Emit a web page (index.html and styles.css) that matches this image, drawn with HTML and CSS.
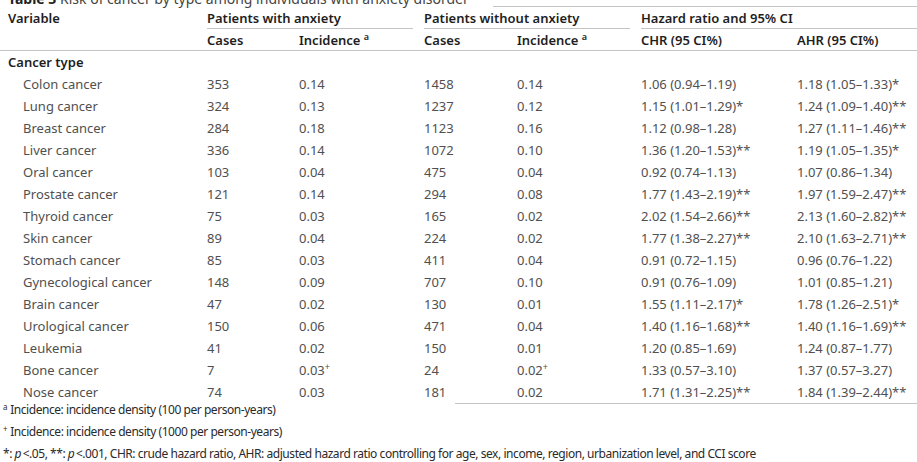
FILE: index.html
```html
<!DOCTYPE html>
<html lang="en">
<head>
<meta charset="utf-8">
<title>Table 3 Risk of cancer by type among individuals with anxiety disorder</title>
<link rel="stylesheet" href="styles.css">
</head>
<body>
<div class="caption">
  <span class="cap-text"><b>Table 3</b> Risk of cancer by type among individuals with anxiety disorder</span>
  <span class="cap-rule"></span>
</div>
<div class="table">
  <div class="row head1">
    <div class="cell first">Variable</div>
    <div class="grp"><div class="grp-label">Patients with anxiety</div></div>
    <div class="grp"><div class="grp-label">Patients without anxiety</div></div>
    <div class="grp last"><div class="grp-label">Hazard ratio and 95% CI</div></div>
  </div>
  <div class="row head2">
    <div class="cell first"></div>
    <div class="cell">Cases</div>
    <div class="cell">Incidence <sup>a</sup></div>
    <div class="cell">Cases</div>
    <div class="cell">Incidence <sup>a</sup></div>
    <div class="cell">CHR (95 CI%)</div>
    <div class="cell">AHR (95 CI%)</div>
  </div>
  <div class="row section"><div class="cell first">Cancer type</div></div>
  <div class="row"><div class="cell label">Colon cancer</div><div class="cell">353</div><div class="cell">0.14</div><div class="cell">1458</div><div class="cell">0.14</div><div class="cell">1.06 (0.94–1.19)</div><div class="cell">1.18 (1.05–1.33)*</div></div>
  <div class="row"><div class="cell label">Lung cancer</div><div class="cell">324</div><div class="cell">0.13</div><div class="cell">1237</div><div class="cell">0.12</div><div class="cell">1.15 (1.01–1.29)*</div><div class="cell">1.24 (1.09–1.40)**</div></div>
  <div class="row"><div class="cell label">Breast cancer</div><div class="cell">284</div><div class="cell">0.18</div><div class="cell">1123</div><div class="cell">0.16</div><div class="cell">1.12 (0.98–1.28)</div><div class="cell">1.27 (1.11–1.46)**</div></div>
  <div class="row"><div class="cell label">Liver cancer</div><div class="cell">336</div><div class="cell">0.14</div><div class="cell">1072</div><div class="cell">0.10</div><div class="cell">1.36 (1.20–1.53)**</div><div class="cell">1.19 (1.05–1.35)*</div></div>
  <div class="row"><div class="cell label">Oral cancer</div><div class="cell">103</div><div class="cell">0.04</div><div class="cell">475</div><div class="cell">0.04</div><div class="cell">0.92 (0.74–1.13)</div><div class="cell">1.07 (0.86–1.34)</div></div>
  <div class="row"><div class="cell label">Prostate cancer</div><div class="cell">121</div><div class="cell">0.14</div><div class="cell">294</div><div class="cell">0.08</div><div class="cell">1.77 (1.43–2.19)**</div><div class="cell">1.97 (1.59–2.47)**</div></div>
  <div class="row"><div class="cell label">Thyroid cancer</div><div class="cell">75</div><div class="cell">0.03</div><div class="cell">165</div><div class="cell">0.02</div><div class="cell">2.02 (1.54–2.66)**</div><div class="cell">2.13 (1.60–2.82)**</div></div>
  <div class="row"><div class="cell label">Skin cancer</div><div class="cell">89</div><div class="cell">0.04</div><div class="cell">224</div><div class="cell">0.02</div><div class="cell">1.77 (1.38–2.27)**</div><div class="cell">2.10 (1.63–2.71)**</div></div>
  <div class="row"><div class="cell label">Stomach cancer</div><div class="cell">85</div><div class="cell">0.03</div><div class="cell">411</div><div class="cell">0.04</div><div class="cell">0.91 (0.72–1.15)</div><div class="cell">0.96 (0.76–1.22)</div></div>
  <div class="row"><div class="cell label">Gynecological cancer</div><div class="cell">148</div><div class="cell">0.09</div><div class="cell">707</div><div class="cell">0.10</div><div class="cell">0.91 (0.76–1.09)</div><div class="cell">1.01 (0.85–1.21)</div></div>
  <div class="row"><div class="cell label">Brain cancer</div><div class="cell">47</div><div class="cell">0.02</div><div class="cell">130</div><div class="cell">0.01</div><div class="cell">1.55 (1.11–2.17)*</div><div class="cell">1.78 (1.26–2.51)*</div></div>
  <div class="row"><div class="cell label">Urological cancer</div><div class="cell">150</div><div class="cell">0.06</div><div class="cell">471</div><div class="cell">0.04</div><div class="cell">1.40 (1.16–1.68)**</div><div class="cell">1.40 (1.16–1.69)**</div></div>
  <div class="row"><div class="cell label">Leukemia</div><div class="cell">41</div><div class="cell">0.02</div><div class="cell">150</div><div class="cell">0.01</div><div class="cell">1.20 (0.85–1.69)</div><div class="cell">1.24 (0.87–1.77)</div></div>
  <div class="row"><div class="cell label">Bone cancer</div><div class="cell">7</div><div class="cell">0.03<sup>+</sup></div><div class="cell">24</div><div class="cell">0.02<sup>+</sup></div><div class="cell">1.33 (0.57–3.10)</div><div class="cell">1.37 (0.57–3.27)</div></div>
  <div class="row"><div class="cell label">Nose cancer</div><div class="cell">74</div><div class="cell">0.03</div><div class="cell">181</div><div class="cell">0.02</div><div class="cell">1.71 (1.31–2.25)**</div><div class="cell">1.84 (1.39–2.44)**</div></div>
</div>
<div class="table-end"></div>
<div class="notes">
  <p class="note"><sup>a</sup> Incidence: incidence density (100 per person-years)</p>
  <p class="note"><sup>+</sup> Incidence: incidence density (1000 per person-years)</p>
  <p class="note">*: <i>p</i>&thinsp;&lt;.05, **: <i>p</i>&thinsp;&lt;.001, CHR: crude hazard ratio, AHR: adjusted hazard ratio controlling for age, sex, income, region, urbanization level, and CCI score</p>
</div>
</body>
</html>
```
FILE: styles.css
```css
html, body {
  margin: 0;
  padding: 0;
  background: #ffffff;
}
body {
  font-family: "Noto Sans", "Open Sans", "Liberation Sans", sans-serif;
  font-size: 13px;
  color: #333333;
  overflow: hidden;
  width: 917px;
  height: 462px;
}

.caption {
  display: flex;
  align-items: flex-end;
  height: 17px;
  margin-top: -10px;
}
.cap-text {
  font-size: 14px;
  line-height: 16px;
  padding-left: 8px;
  color: #444;
  white-space: nowrap;
}
.cap-text b {
  font-weight: 700;
  color: #222;
}
.cap-rule {
  flex: 1;
  margin-left: 24px;
  border-bottom: 1px solid #c4c4c4;
}

.row {
  display: grid;
  grid-template-columns: 207px 92px 125px 93px 124px 156px 120px;
  box-sizing: border-box;
  height: 22px;
  line-height: 22px;
  color: #505050;
}
.cell {
  white-space: nowrap;
}
.cell.first {
  padding-left: 8px;
}
.cell.label {
  padding-left: 23px;
}

.head1,
.head2,
.section {
  font-weight: 600;
  color: #1e1e1e;
}
.head2 {
  border-bottom: 1px solid #c4c4c4;
}
.grp {
  grid-column: span 2;
  padding-right: 11px;
}
.grp.last {
  padding-right: 0;
}
.grp-label {
  box-sizing: border-box;
  height: 22px;
  border-bottom: 1px solid #c4c4c4;
  white-space: nowrap;
}

.table-end {
  margin-left: 455px;
  border-top: 1px solid #c4c4c4;
}

sup {
  font-size: 9px;
  line-height: 0;
  vertical-align: 0;
  position: relative;
  top: -5px;
}

.notes {
  margin-top: -5px;
}
.note {
  margin: 0;
  padding-left: 3px;
  font-size: 12px;
  letter-spacing: -0.45px;
  line-height: 22px;
  color: #2a2a2a;
  white-space: nowrap;
}
.note sup {
  font-size: 8px;
  top: -4px;
  letter-spacing: 0;
}
.note i {
  font-style: italic;
}
```
